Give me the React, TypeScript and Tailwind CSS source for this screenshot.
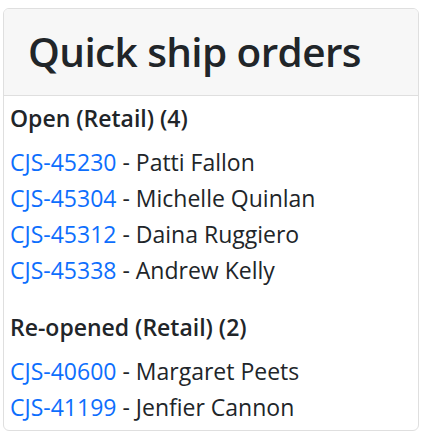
import React from "react";

const open = [
  ["CJS-45230", "Patti Fallon"],
  ["CJS-45304", "Michelle Quinlan"],
  ["CJS-45312", "Daina Ruggiero"],
  ["CJS-45338", "Andrew Kelly"],
];
const reopened = [
  ["CJS-40600", "Margaret Peets"],
  ["CJS-41199", "Jenfier Cannon"],
];

function Item({ id, name }: { id: string; name: string }) {
  return (
    <div className="h-[36px] leading-[36px] text-[23px] text-[#212529] whitespace-nowrap">
      <a href="#" className="text-[#0d6efd]">{id}</a> - {name}
    </div>
  );
}

export default function App() {
  return (
    <div className="bg-white w-[422px] h-[434px] pt-[8px] px-[3px]" style={{ fontFamily: '"Open Sans", "Noto Sans", sans-serif' }}>
      <div className="border border-[#dfdfdf] rounded-[6px] overflow-hidden h-[423px] flex flex-col">
        <div className="bg-[#f7f7f7] border-b border-[#dfdfdf] h-[87px] flex items-center pl-[24px]">
          <h1 className="text-[40.5px] font-semibold tracking-[-0.6px] text-[#212529] leading-none whitespace-nowrap">Quick ship orders</h1>
        </div>
        <div className="pl-[6px] pt-[4px] flex flex-col">
          <div className="h-[36px] leading-[36px] text-[23px] font-semibold text-[#212529]">Open (Retail) (4)</div>
          <div className="mt-[8px] flex flex-col">
            {open.map(([i, n]) => <Item key={i} id={i} name={n} />)}
          </div>
          <div className="mt-[21px] h-[36px] leading-[36px] text-[23px] font-semibold text-[#212529]">Re-opened (Retail) (2)</div>
          <div className="mt-[8px] flex flex-col">
            {reopened.map(([i, n]) => <Item key={i} id={i} name={n} />)}
          </div>
        </div>
      </div>
    </div>
  );
}
